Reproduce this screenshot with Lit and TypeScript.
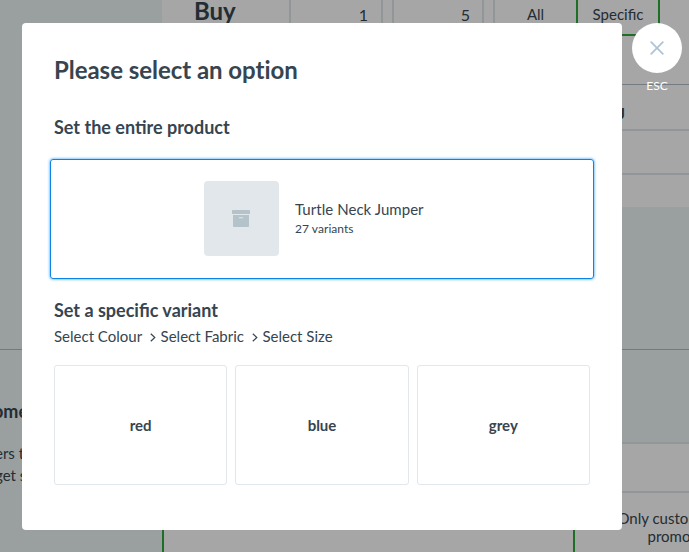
import { LitElement, html, css } from "lit";
import { customElement } from "lit/decorators.js";

@customElement("promotion-page")
class PromotionPage extends LitElement {
  static styles = css`
    :host {
      display: grid;
      grid-template-columns: 162px 1fr;
      height: 552px;
      overflow: hidden;
      background: #edf4f5;
      color: #36454f;
      font: 15px/22px Lato, sans-serif;
    }
    * { box-sizing: border-box; }
    .side { display: flex; flex-direction: column; overflow: hidden; white-space: nowrap; }
    .side-top { height: 350px; border-bottom: 1px solid #b4bcbf; }
    .side-title { font-size: 18px; font-weight: 700; line-height: 24px; margin: 49px 0 0 -7px; }
    .side-text { margin: 19px 0 0 -5px; }
    .main { display: flex; flex-direction: column; overflow: hidden; min-width: 0; }
    .rule { display: flex; height: 84px; background: #fff; flex: none; }
    .buy { width: 127px; padding-left: 32px; font-size: 24px; font-weight: 700; line-height: 22px; flex: none; }
    .field { height: 36px; border: 2px solid #dfe6eb; border-top: 0; text-align: right; line-height: 30px; font-size: 16px; flex: none; }
    .f1 { width: 94px; padding-right: 13px; }
    .f2 { width: 92px; margin-left: 9px; padding-right: 12px; }
    .toggle { display: flex; height: 36px; margin-left: 9px; line-height: 29px; text-align: center; flex: none; }
    .all { width: 83px; border-left: 2px solid #dfe6eb; }
    .specific { width: 84px; border: 2px solid #2fab3b; border-top: 0; }
    .row { background: #fff; border-top: 2px solid #dfe6eb; flex: none; }
    .r1 { height: 45px; border-top: 1px solid #b2bfc6; padding: 17px 64px 0 0; font-weight: 700; text-align: right; white-space: nowrap; }
    .r2 { height: 44px; }
    .r3 { height: 34px; }
    .gap { height: 143px; border-bottom: 1px solid #b4bcbf; flex: none; }
    .gap2 { height: 92px; flex: none; }
    .r4 { height: 49px; }
    .choices { display: flex; flex: 1; background: #fff; border-top: 2px solid #dfe6eb; }
    .c1 { width: 411px; border-left: 2px solid #2fab3b; flex: none; }
    .c2 { width: 190px; border-left: 2px solid #2fab3b; padding-top: 16px; line-height: 18px; text-align: center; flex: none; white-space: nowrap; }
  `;
  render() {
    return html`
      <div class="side">
        <div class="side-top"></div>
        <div class="side-title">ome</div>
        <div class="side-text">ers to<br />get s</div>
      </div>
      <div class="main">
        <div class="rule">
          <div class="buy">Buy</div>
          <div class="field f1">1</div>
          <div class="field f2">5</div>
          <div class="toggle">
            <div class="all">All</div>
            <div class="specific">Specific</div>
          </div>
        </div>
        <div class="row r1">J</div>
        <div class="row r2"></div>
        <div class="row r3"></div>
        <div class="gap"></div>
        <div class="gap2"></div>
        <div class="row r4"></div>
        <div class="choices">
          <div class="c1"></div>
          <div class="c2">Only customers<br />promo</div>
        </div>
      </div>
    `;
  }
}

@customElement("option-dialog")
class OptionDialog extends LitElement {
  static styles = css`
    :host {
      display: block;
      width: 600px;
      height: 507px;
      box-sizing: border-box;
      padding: 32px;
      background: #fff;
      border-radius: 4px;
      color: #36454f;
      font: 15px/20px Lato, sans-serif;
    }
    * { box-sizing: border-box; }
    h1, h2 { margin: 0; font-weight: 700; }
    h1 { font-size: 24px; line-height: 30px; letter-spacing: -0.04px; }
    h2 { font-size: 18px; line-height: 24px; }
    .entire { margin-top: 30px; }
    .product {
      display: flex;
      align-items: center;
      gap: 16px;
      height: 120px;
      margin: 20px -4px 0;
      padding: 0 0 2px 153px;
      border: 1px solid #0a84e8;
      border-radius: 3px;
      box-shadow: 0 0 3px #1592f5;
    }
    .thumb {
      display: grid;
      place-items: center;
      width: 75px;
      height: 75px;
      border-radius: 4px;
      background: #e1e7eb;
    }
    .thumb svg { display: block; margin-right: 1px; }
    .name { margin-top: -1px; letter-spacing: 0.05px; }
    .small { font-size: 12px; line-height: 16px; margin: 2px 0 -1px; letter-spacing: 0.05px; }
    .variant { margin-top: 19px; }
    .crumbs { display: flex; align-items: center; margin-top: 4px; }
    .crumbs svg { margin: 2px 4.5px 0 8px; }
    .cards { display: grid; grid-template-columns: repeat(3, 1fr); gap: 8px; margin-top: 19px; }
    .card {
      display: grid;
      place-items: center;
      height: 120px;
      border: 1px solid #e1e7eb;
      border-radius: 3px;
      font-weight: 700;
    }
  `;
  private steps = ["Select Colour", "Select Fabric", "Select Size"];
  private colours = ["red", "blue", "grey"];
  render() {
    const chevron = html`<svg width="6" height="9" viewBox="0 0 6 9" fill="none" stroke="#36454f" stroke-width="1.2"><path d="M.8.7 4.8 4.5.8 8.3" /></svg>`;
    return html`
      <h1>Please select an option</h1>
      <h2 class="entire">Set the entire product</h2>
      <div class="product">
        <div class="thumb">
          <svg width="18" height="17" viewBox="0 0 18 17" fill="#b4c3ca">
            <rect width="18" height="4" rx=".6" />
            <path d="M1 5h16v11.2a.8.8 0 0 1-.8.8H1.8a.8.8 0 0 1-.8-.8zM7 7.2v.5q0 .5.5.5h3q.5 0 .5-.5v-.5z" fill-rule="evenodd" />
          </svg>
        </div>
        <div>
          <div class="name">Turtle Neck Jumper</div>
          <div class="small">27 variants</div>
        </div>
      </div>
      <h2 class="variant">Set a specific variant</h2>
      <div class="crumbs">${this.steps.map((s, i) => html`${i ? chevron : ""}<span>${s}</span>`)}</div>
      <div class="cards">${this.colours.map((c) => html`<div class="card">${c}</div>`)}</div>
    `;
  }
}

@customElement("app-root")
class AppRoot extends LitElement {
  static styles = css`
    :host { display: block; position: relative; height: 552px; overflow: hidden; }
    .overlay {
      position: absolute;
      inset: 0;
      display: flex;
      align-items: flex-start;
      gap: 10px;
      padding: 23px 0 0 22px;
      background: rgba(0, 0, 0, 0.35);
    }
    .overlay option-dialog { flex: none; }
    .close { display: flex; flex-direction: column; align-items: center; width: 50px; color: #fff; font: 12px/16px Lato, sans-serif; }
    .circle { display: grid; place-items: center; width: 50px; height: 50px; margin-bottom: 5px; border-radius: 50%; background: #fff; }
  `;
  render() {
    return html`
      <promotion-page></promotion-page>
      <div class="overlay">
        <option-dialog></option-dialog>
        <div class="close">
          <div class="circle">
            <svg width="14" height="14" viewBox="0 0 14 14" stroke="#adc4d8" stroke-width="1.8" stroke-linecap="round"><path d="M1.2 1.2 12.8 12.8M12.8 1.2 1.2 12.8" /></svg>
          </div>
          <span>ESC</span>
        </div>
      </div>
    `;
  }
}
